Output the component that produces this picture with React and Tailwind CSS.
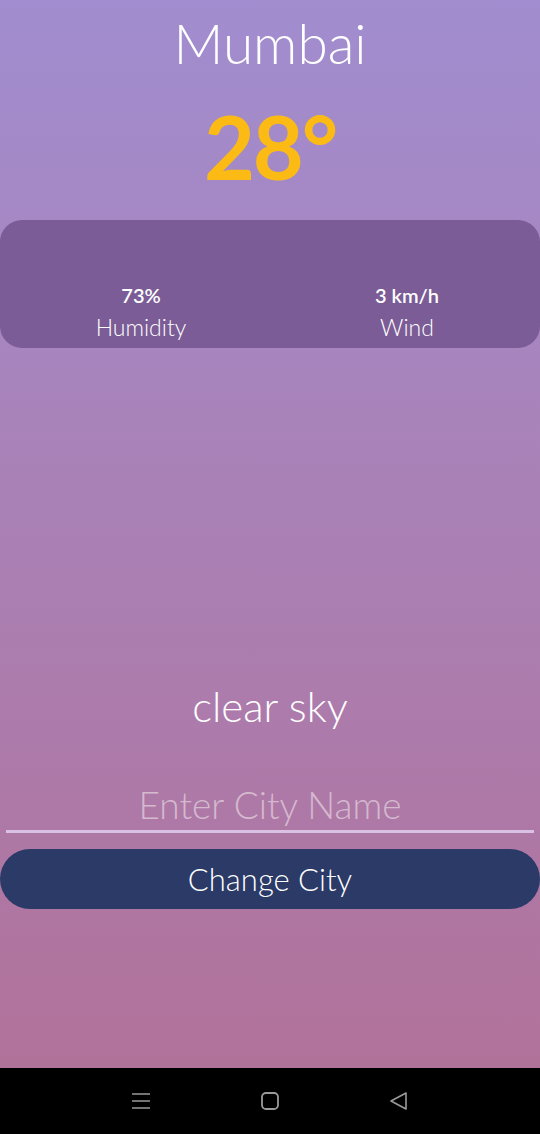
export default function App() {
  return (
    <div className="w-[540px] h-[1134px] flex flex-col" style={{ fontFamily: "Lato, 'Noto Sans', sans-serif" }}>
      <div className="flex-1 flex flex-col bg-gradient-to-b from-[#a18dcf] to-[#b1729a]">
        <div className="h-[12px]" />
        <h1 className="text-center text-white text-[55px] leading-[62px] font-light">Mumbai</h1>
        <div className="h-[26px]" />
        <div className="text-center text-[#fcbb14] text-[88px] leading-[92px] font-bold tracking-tight">28°</div>
        <div className="h-[28px]" />
        <div className="h-[128px] rounded-[22px] bg-[#7b5c96] flex items-end pb-[5px] pl-[8px]">
          <div className="flex-1 flex flex-col items-center text-white">
            <span className="text-[20px] leading-[28px] font-semibold mb-[2px]">73%</span>
            <span className="text-[23px] leading-[32px] font-light">Humidity</span>
          </div>
          <div className="flex-1 flex flex-col items-center text-white">
            <span className="text-[20px] leading-[28px] font-semibold mb-[2px]">3 km/h</span>
            <span className="text-[23px] leading-[32px] font-light">Wind</span>
          </div>
        </div>
        <div className="h-[334px]" />
        <div className="text-center text-white text-[42px] leading-[48px] font-light">clear sky</div>
        <div className="h-[49px]" />
        <div className="px-[6px]">
          <input
            placeholder="Enter City Name"
            className="w-full bg-transparent text-center text-[37px] leading-[51px] font-light text-white placeholder:text-[#d4b9cf] border-b-[3px] border-[#d9c1e3] outline-none"
          />
        </div>
        <div className="h-[16px]" />
        <button className="w-full h-[60px] rounded-full bg-[#2b3a67] text-white text-[31px] font-light">Change City</button>
      </div>
      <div className="h-[66px] bg-black flex items-center justify-center gap-[109px]">
        <svg width="20" height="20" viewBox="0 0 20 20">
          <path d="M1 3h18M1 10h18M1 17h18" stroke="#9a9a9a" strokeWidth="1.5" />
        </svg>
        <svg width="20" height="20" viewBox="0 0 20 20">
          <rect x="2" y="2" width="16" height="16" rx="4" fill="none" stroke="#9a9a9a" strokeWidth="1.8" />
        </svg>
        <svg width="20" height="20" viewBox="0 0 20 20">
          <path d="M17 2 L2 10 L17 18 Z" fill="none" stroke="#9a9a9a" strokeWidth="1.6" strokeLinejoin="round" />
        </svg>
      </div>
    </div>
  );
}
